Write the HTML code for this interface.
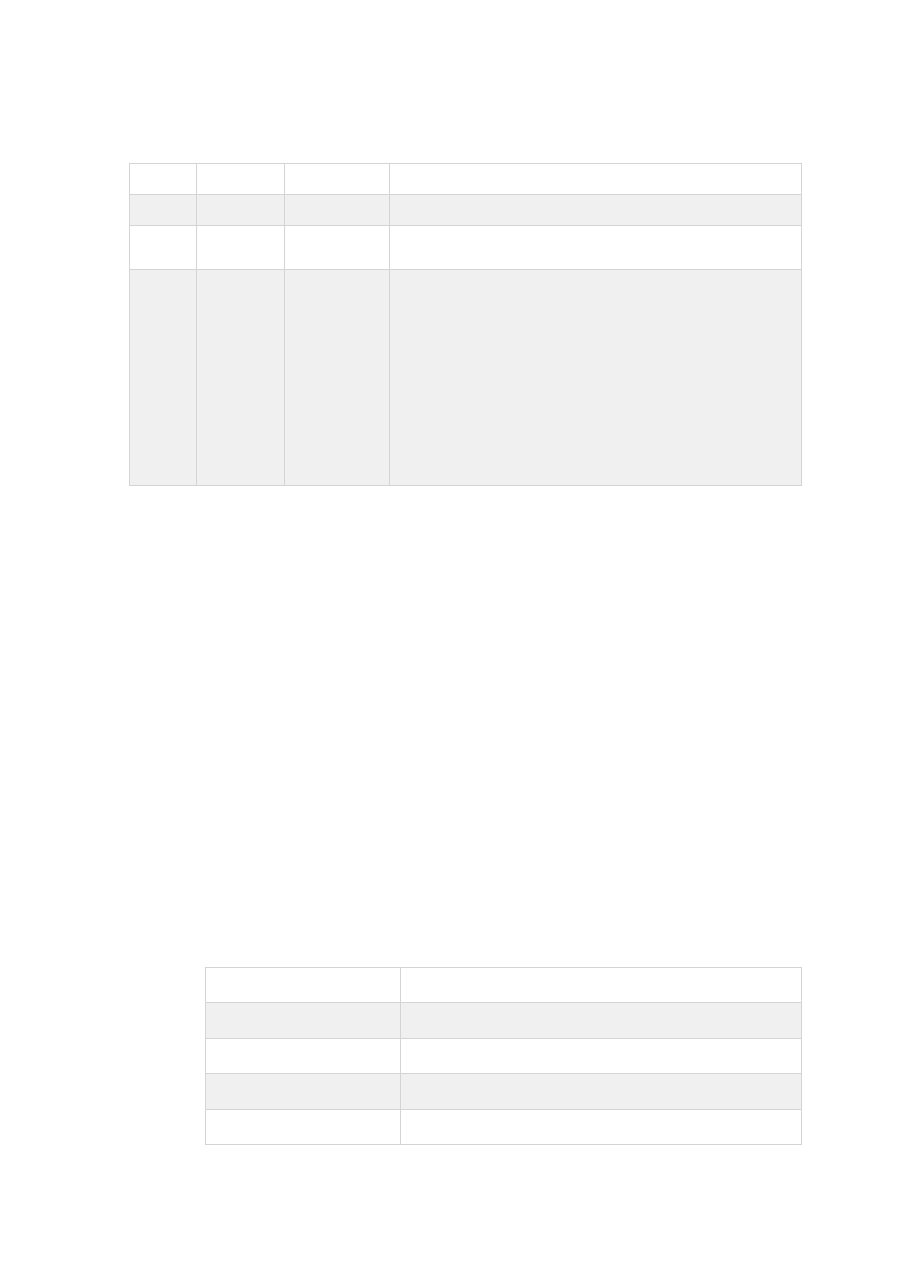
<!DOCTYPE html>
<html><head><meta charset="utf-8"><style>
html,body{margin:0;padding:0;background:#fff;width:910px;height:1286px;overflow:hidden;position:relative}
div{position:absolute}
.g{background:#f0f0f0}
.h{height:1px;background:#d4d4d4}
.v{width:1px;background:#d4d4d4}
</style></head><body>
<!-- table 1 -->
<div class="g" style="left:129px;top:194px;width:673px;height:32px"></div>
<div class="g" style="left:129px;top:269px;width:673px;height:216px"></div>
<div class="h" style="left:129px;top:163px;width:673px"></div>
<div class="h" style="left:129px;top:194px;width:673px"></div>
<div class="h" style="left:129px;top:225px;width:673px"></div>
<div class="h" style="left:129px;top:269px;width:673px"></div>
<div class="h" style="left:129px;top:485px;width:673px"></div>
<div class="v" style="left:129px;top:163px;height:323px"></div>
<div class="v" style="left:196px;top:163px;height:323px"></div>
<div class="v" style="left:284px;top:163px;height:323px"></div>
<div class="v" style="left:389px;top:163px;height:323px"></div>
<div class="v" style="left:801px;top:163px;height:323px"></div>
<!-- table 2 -->
<div class="g" style="left:205px;top:1002px;width:597px;height:36px"></div>
<div class="g" style="left:205px;top:1074px;width:597px;height:35px"></div>
<div class="h" style="left:205px;top:967px;width:597px"></div>
<div class="h" style="left:205px;top:1002px;width:597px"></div>
<div class="h" style="left:205px;top:1038px;width:597px"></div>
<div class="h" style="left:205px;top:1073px;width:597px"></div>
<div class="h" style="left:205px;top:1109px;width:597px"></div>
<div class="h" style="left:205px;top:1144px;width:597px"></div>
<div class="v" style="left:205px;top:967px;height:178px"></div>
<div class="v" style="left:400px;top:967px;height:178px"></div>
<div class="v" style="left:801px;top:967px;height:178px"></div>
</body></html>
